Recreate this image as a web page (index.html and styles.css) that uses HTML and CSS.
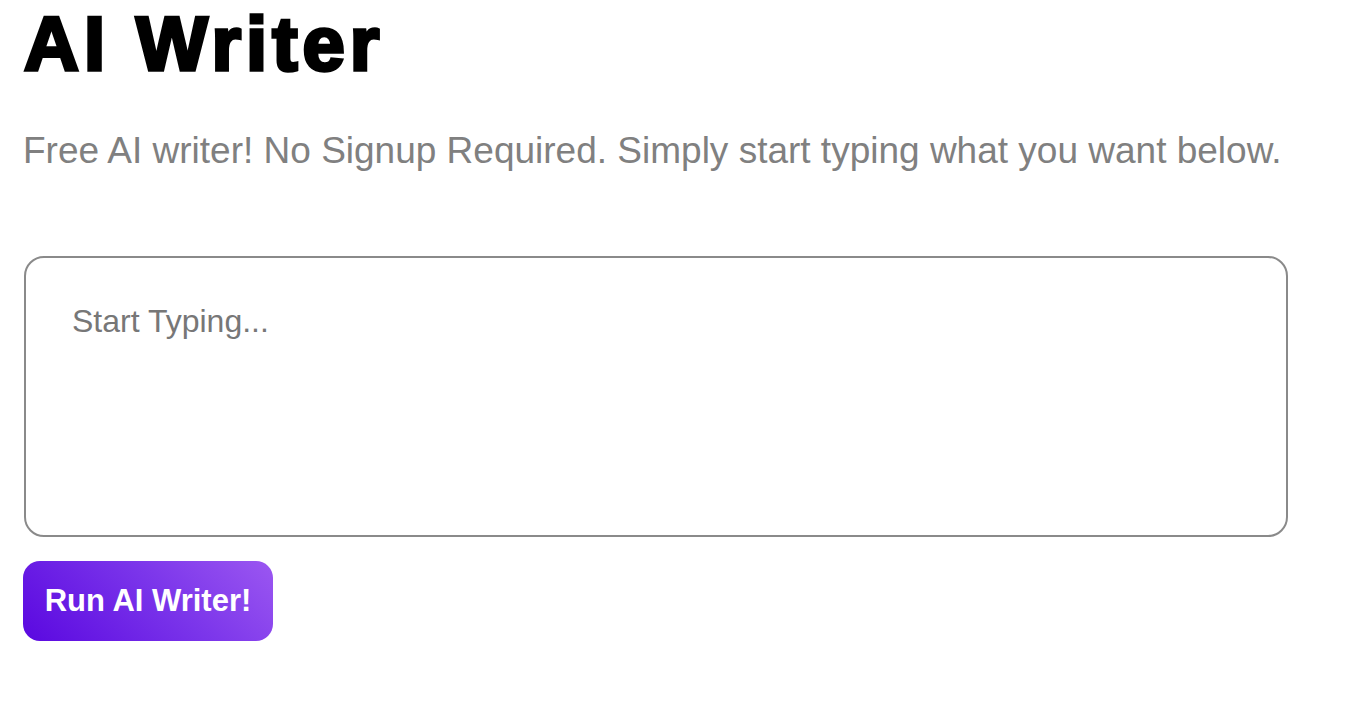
FILE: index.html
```html
<!DOCTYPE html>
<html lang="en">
<head>
<meta charset="utf-8">
<title>AI Writer</title>
<link rel="stylesheet" href="styles.css">
</head>
<body>
<main class="page">
  <h1 class="title">AI Writer</h1>
  <p class="subtitle">Free AI writer! No Signup Required. Simply start typing what you want below.</p>
  <textarea class="editor" placeholder="Start Typing..."></textarea>
  <button class="run-btn" type="button">Run AI Writer!</button>
</main>
</body>
</html>
```

FILE: styles.css
```css
html, body {
  margin: 0;
  padding: 0;
  background: #ffffff;
}

.page {
  padding: 5px 23px;
  font-family: "Liberation Sans", Arial, sans-serif;
}

.title {
  margin: 0;
  padding-left: 1px;
  font-size: 76px;
  line-height: 77px;
  font-weight: 700;
  color: #000;
  letter-spacing: 5px;
  -webkit-text-stroke: 3.5px #000;
}

.subtitle {
  margin: 47px 0 0;
  font-size: 37px;
  line-height: 43px;
  color: #808080;
}

.editor {
  display: block;
  box-sizing: border-box;
  margin: 84px 0 0 1px;
  width: 1264px;
  height: 281px;
  padding: 45px 46px;
  border: 2px solid #8a8a8a;
  border-radius: 20px;
  font-family: "Liberation Sans", Arial, sans-serif;
  font-size: 32px;
  color: #333;
  resize: none;
  outline: none;
}

.editor::placeholder {
  color: #777;
}

.run-btn {
  display: block;
  margin-top: 24px;
  box-sizing: border-box;
  width: 250px;
  height: 80px;
  padding: 0;
  border: none;
  border-radius: 17px;
  background: linear-gradient(45deg, #5a08e0 0%, #7a34ea 55%, #9b57f1 100%);
  color: #fff;
  font-family: "Liberation Sans", Arial, sans-serif;
  font-weight: 700;
  font-size: 31px;
  cursor: pointer;
}
```
